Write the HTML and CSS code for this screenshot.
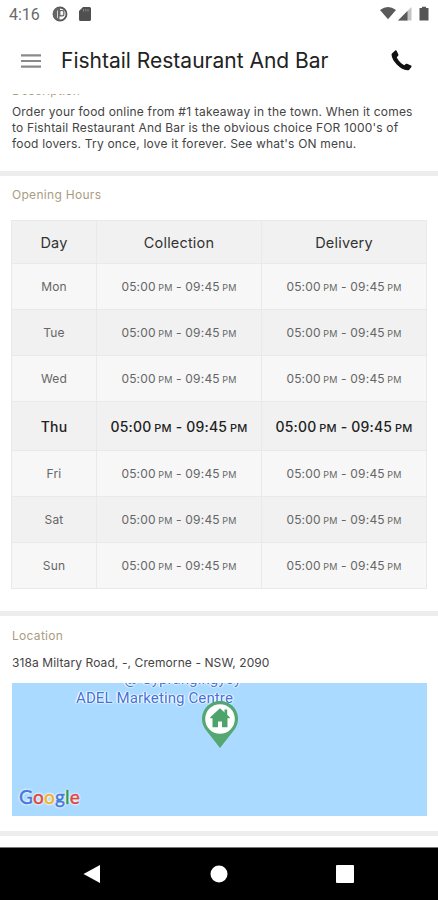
FILE: index.html
```html
<!DOCTYPE html>
<html lang="en">
<head>
  <meta charset="UTF-8">
  <meta name="viewport" content="width=device-width,initial-scale=1.0">
  <title>Fishtail Restaurant And Bar</title>
  <link rel="stylesheet" href="styles.css">
</head>
<body>
  <div class="app">
    <div class="status-bar">
      <span class="clock">4:16</span>
      <svg class="status-icon" width="16" height="16" viewBox="0 0 16 16">
        <circle cx="8" cy="8" r="6.500" fill="#fff" stroke="#555" stroke-width="1.800"/>
        <path d="M8 1.200A6.800 6.800 0 0 0 3 12.600L7.500 14.500V10.500H10.500A2 2 0 0 0 12.500 8.500V5.500A1.500 1.500 0 0 0 11 4H8z" fill="#666"/>
        <path d="M5.500 4.500V12M8.800 5.500v3.300h2V5.500z" fill="#fff" stroke="#fff" stroke-width=".7"/>
      </svg>
      <svg class="status-icon card-icon" width="12" height="14" viewBox="0 0 12 14">
        <path d="M4 0h6.500A1.500 1.500 0 0 1 12 1.500v11a1.500 1.500 0 0 1-1.500 1.500h-9A1.500 1.500 0 0 1 0 12.500V4z" fill="#505050"/>
        <path d="M4.500 2v2.500M6.800 2v2.500M9 2v2.500" stroke="#888" stroke-width="1"/>
      </svg>
      <svg class="signals" width="50" height="16" viewBox="0 0 50 16">
        <path d="M0 4Q8 -2 16 4L8 13.300z" fill="#5a5a5a"/>
        <path d="M18 14.500L31.500 1v13.500z" fill="#c4c4c4"/>
        <path d="M18 14.500L27.500 5v9.500z" fill="#5a5a5a"/>
        <path d="M39.500 2H42V.8h4V2h2.500v12.500h-9z" fill="#555"/>
      </svg>
    </div>

    <div class="header">
      <svg class="menu-icon" width="20" height="14" viewBox="0 0 20 14">
        <path d="M0 1.300h20M0 7h20M0 12.700h20" stroke="#8a8a8a" stroke-width="2.200"/>
      </svg>
      <h1>Fishtail Restaurant And Bar</h1>
      <svg class="phone-icon" width="21" height="21" viewBox="0 0 21 21">
        <path d="M1.200 3.200L4.200.5Q5 0 5.600.8L7.400 4.600Q7.700 5.400 7 6L5.700 7.200Q8 12.200 13.300 15.200L14.700 14Q15.300 13.500 16 13.800L20 15.600Q20.900 16.100 20.400 16.900L18.200 19.800Q17.500 20.500 16.300 20.300Q11 19.800 6 14.800Q.8 9.500.5 4.600Q.5 3.800 1.200 3.200z" fill="#111"/>
      </svg>
    </div>

    <div class="section description">
      <div class="clip"><h2>Description</h2></div>
      <p>Order your food online from #1 takeaway in the town. When it comes<br>
      to Fishtail Restaurant And Bar is the obvious choice FOR 1000's of<br>
      food lovers. Try once, love it forever. See what's ON menu.</p>
    </div>

    <div class="section hours">
      <h2>Opening Hours</h2>
      <table>
        <tr class="head"><th>Day</th><th>Collection</th><th>Delivery</th></tr>
        <tr><td>Mon</td><td>05:00 <small>PM</small> - 09:45 <small>PM</small></td><td>05:00 <small>PM</small> - 09:45 <small>PM</small></td></tr>
        <tr class="even"><td>Tue</td><td>05:00 <small>PM</small> - 09:45 <small>PM</small></td><td>05:00 <small>PM</small> - 09:45 <small>PM</small></td></tr>
        <tr><td>Wed</td><td>05:00 <small>PM</small> - 09:45 <small>PM</small></td><td>05:00 <small>PM</small> - 09:45 <small>PM</small></td></tr>
        <tr class="even today"><td>Thu</td><td>05:00 <small>PM</small> - 09:45 <small>PM</small></td><td>05:00 <small>PM</small> - 09:45 <small>PM</small></td></tr>
        <tr><td>Fri</td><td>05:00 <small>PM</small> - 09:45 <small>PM</small></td><td>05:00 <small>PM</small> - 09:45 <small>PM</small></td></tr>
        <tr class="even"><td>Sat</td><td>05:00 <small>PM</small> - 09:45 <small>PM</small></td><td>05:00 <small>PM</small> - 09:45 <small>PM</small></td></tr>
        <tr><td>Sun</td><td>05:00 <small>PM</small> - 09:45 <small>PM</small></td><td>05:00 <small>PM</small> - 09:45 <small>PM</small></td></tr>
      </table>
    </div>

    <div class="section location">
      <h2>Location</h2>
      <p class="address">318a Miltary Road, -, Cremorne - NSW, 2090</p>
      <div class="map">
        <span class="place place-top">@ Gyprangingyoy</span>
        <span class="place place-name">ADEL Marketing Centre</span>
        <svg class="pin" width="38" height="48" viewBox="0 0 38 48">
          <path d="M19 47L4.500 28.500A18 18 0 1 1 33.500 28.500z" fill="#55a771"/>
          <circle cx="19" cy="18" r="14.800" fill="#fff"/>
          <path d="M19 7.200L28.800 16.300V17.300H26.500V26.200H21V20.500H17V26.200H11.500V17.300H9.200V16.300z" fill="#4da36a"/>
          <path d="M23.500 8.500h2.700v6h-2.700z" fill="#4da36a"/>
        </svg>
        <span class="google"><span class="blue">G</span><span class="red">o</span><span class="yellow">o</span><span class="blue">g</span><span class="green">l</span><span class="red">e</span></span>
      </div>
    </div>

    <div class="nav-bar">
      <svg width="18" height="20" viewBox="0 0 18 20"><path d="M0.500 10L17 1v18z" fill="#fff"/></svg>
      <svg width="18" height="18" viewBox="0 0 18 18"><circle cx="9" cy="9" r="8.500" fill="#fff"/></svg>
      <svg width="18" height="18" viewBox="0 0 18 18"><rect width="18" height="18" rx="1" fill="#fff"/></svg>
    </div>
  </div>
</body>
</html>
```

FILE: styles.css
```css
body {
  margin: 0;
  background: #fff;
  font-family: Inter, "Liberation Sans", sans-serif;
  color: #444;
}

.app {
  display: flex;
  flex-direction: column;
  width: 438px;
  height: 900px;
  overflow: hidden;
}

.status-bar {
  display: flex;
  align-items: center;
  height: 28px;
  padding: 0 8px 0 9px;
}

.clock {
  width: 43px;
  font: 16px Roboto, sans-serif;
  color: #6a6a6a;
}

.card-icon {
  margin-left: 11px;
}

.signals {
  margin-left: auto;
}

.header {
  display: flex;
  align-items: center;
  height: 66px;
  padding: 0 26px 1px 21px;
  box-sizing: border-box;
}

.header h1 {
  margin: 0 0 0 20px;
  font-size: 21px;
  font-weight: 400;
  line-height: 26px;
  color: #222;
  white-space: nowrap;
}

.phone-icon {
  margin-left: auto;
}

.section {
  box-sizing: border-box;
  padding: 0 11px 0 12px;
  border-bottom: 5px solid #ededed;
}

h2 {
  margin: 0;
  font-size: 12px;
  font-weight: 400;
  line-height: 16px;
  letter-spacing: 0.3px;
  color: #aa9c82;
}

p {
  margin: 0;
  font-size: 12px;
  line-height: 16px;
  letter-spacing: 0.19px;
  white-space: nowrap;
}

.description {
  height: 82px;
}

/* heading is scrolled under the header */
.clip {
  display: flex;
  align-items: flex-end;
  height: 5px;
  margin-bottom: 5px;
  overflow: hidden;
}

.hours {
  height: 440px;
  padding-top: 11px;
}

table {
  width: 416px;
  margin: 17px 0 0 -1px;
  border-collapse: collapse;
  table-layout: fixed;
  border: 1px solid #e6e6e6;
  border-top-color: #d4d4d4;
}

tr {
  height: 46px;
  background: #f7f7f7;
}

.head {
  height: 43px;
}

.head,
.even {
  background: #f1f1f1;
}

.today {
  height: 49px;
}

th,
td {
  padding: 0;
  border: 1px solid #e9e9e9;
  text-align: center;
  font-size: 12px;
  letter-spacing: 0.18px;
  color: #666;
  white-space: nowrap;
}

th {
  font-size: 14.5px;
  font-weight: 400;
  color: #333;
}

th:first-child {
  width: 84px;
}

small {
  font-size: 9px;
  margin-left: -1px;
}

.today td {
  font-size: 14px;
  font-weight: 500;
  color: #222;
}

.today small {
  font-size: 11px;
}

.location {
  height: 220px;
  padding-top: 12px;
}

.address {
  margin-top: 11px;
  letter-spacing: 0.1px;
}

.map {
  position: relative;
  height: 133px;
  margin-top: 12px;
  overflow: hidden;
  background: #aadaff;
}

.place {
  position: absolute;
  left: 64px;
  top: 6px;
  font: 15px/18px Roboto, sans-serif;
  letter-spacing: 0.12px;
  color: #3f73dc;
  white-space: nowrap;
  text-shadow: 0 0 2px #fff, 0 0 2px #fff, 1px 0 1px #fff, -1px 0 1px #fff;
}

.place-top {
  left: 112px;
  top: -13px;
}

.pin {
  position: absolute;
  left: 189px;
  top: 18px;
}

.google {
  position: absolute;
  left: 7px;
  top: 102px;
  font: 500 19px/24px Lato, sans-serif;
  letter-spacing: 0.2px;
  -webkit-text-stroke: 0.4px;
  text-shadow: 0 0 2px #fff, 0 0 2px #fff, 0 0 3px #fff;
}

.blue { color: #4479e0; }
.red { color: #dc4a3f; }
.yellow { color: #f0b42c; }
.green { color: #2d9b54; }

.nav-bar {
  display: flex;
  align-items: center;
  justify-content: space-between;
  height: 53px;
  margin-top: auto;
  padding: 0 84px 0 83px;
  box-sizing: border-box;
  border-top: 1px solid #777;
  background: #000;
}
```
